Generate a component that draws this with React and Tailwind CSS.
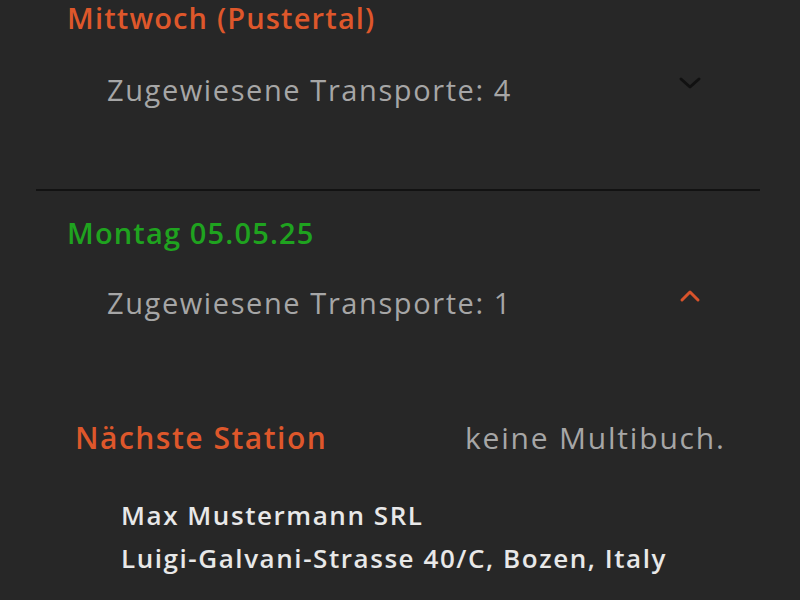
import React from "react";

function Chevron({ up, color }) {
  return (
    <svg width="24" height="14" viewBox="0 0 24 14" fill="none" aria-hidden="true">
      <path
        d={up ? "M4 11 L12 3 L20 11" : "M3 3 L12 11 L21 3"}
        stroke={color}
        strokeWidth="3"
        strokeLinecap="round"
        strokeLinejoin="round"
      />
    </svg>
  );
}

function DayGroup({ title, titleColor, count, open, rowGap }) {
  return (
    <div>
      <h3 className={`pl-[67px] text-[29px] font-semibold leading-[36px] tracking-[0.04em] ${titleColor}`}>{title}</h3>
      <div className={`${rowGap} flex items-center justify-between pl-[107px] pr-[98px]`}>
        <span className="text-[29px] leading-[36px] tracking-[0.055em] text-[#a6a6a6]">Zugewiesene Transporte: {count}</span>
        <span className="mt-[-14px]">
          {open ? <Chevron up color="#d8532b" /> : <Chevron color="#111111" />}
        </span>
      </div>
    </div>
  );
}

export default function App() {
  return (
    <div
      className="h-[600px] w-[800px] overflow-hidden bg-[#272727]"
      style={{ fontFamily: "'Open Sans', 'Noto Sans', sans-serif" }}
    >
      <DayGroup title="Mittwoch (Pustertal)" titleColor="text-[#de572b]" count={4} rowGap="mt-[36px]" />

      <div className="ml-[36px] mr-[40px] mt-[81px] h-[2px] bg-[#121212]" />

      <div className="mt-[24px]">
        <DayGroup title="Montag 05.05.25" titleColor="text-[#1fa31f]" count={1} open rowGap="mt-[34px]" />
      </div>

      <div className="mt-[99px] flex pl-[75px]">
        <span className="w-[390px] text-[30px] font-semibold leading-[36px] tracking-[0.05em] text-[#de572b]">Nächste Station</span>
        <span className="text-[30px] leading-[36px] tracking-[0.06em] text-[#a6a6a6]">keine Multibuch.</span>
      </div>

      <div className="mt-[38px] pl-[121px] text-[26px] font-semibold leading-[43px] tracking-[0.06em] text-[#e8e8e8]">
        <p>Max Mustermann SRL</p>
        <p>Luigi-Galvani-Strasse 40/C, Bozen, Italy</p>
      </div>
    </div>
  );
}
